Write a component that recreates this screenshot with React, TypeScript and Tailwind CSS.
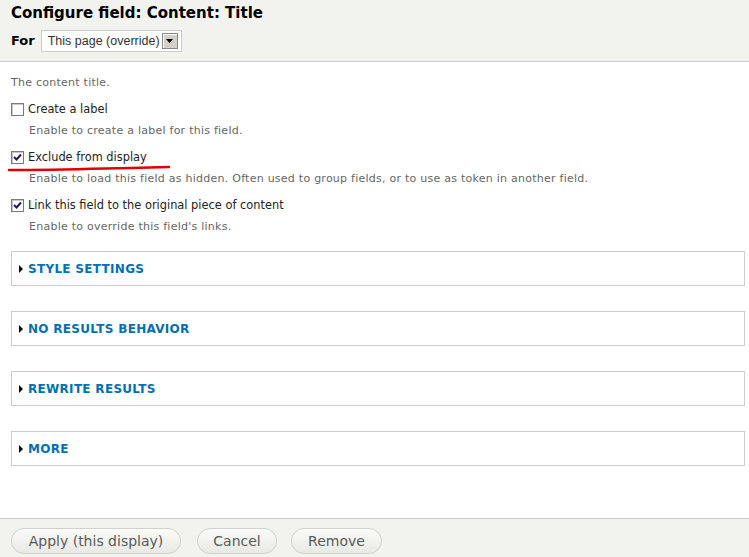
import type { ReactNode } from 'react';

const font = { fontFamily: '"DejaVu Sans", Verdana, sans-serif' };

function Check({ checked }: { checked?: boolean }) {
  return (
    <span className="inline-flex h-[13px] w-[13px] shrink-0 items-center justify-center border border-[#7a7a7a] bg-white shadow-[inset_1px_1px_0_#c8c8c8]">
      {checked && (
        <svg width="9" height="9" viewBox="0 0 9 9">
          <path d="M1 4 L3.5 6.5 L8 1.5" fill="none" stroke="#1c1c5e" strokeWidth="2" />
        </svg>
      )}
    </span>
  );
}

function Option({ label, help, checked, children }: { label: string; help: string; checked?: boolean; children?: ReactNode }) {
  return (
    <div className="relative">
      <label className="flex items-center gap-[4px] pl-[11px] text-[11.4px] leading-[16px] text-[#222]">
        <Check checked={checked} />
        <span>{label}</span>
      </label>
      {children}
      <p className="mt-[7px] pl-[29px] text-[11px] leading-[14px] tracking-[0.25px] text-[#666]">{help}</p>
    </div>
  );
}

function Fieldset({ title }: { title: string }) {
  return (
    <div className="ml-[11px] mr-[4px] flex h-[35px] items-center border border-[#ccc] bg-white pl-[6px]">
      <svg width="6" height="8" viewBox="0 0 6 8" className="mr-[4px]">
        <path d="M1 0 L5 4 L1 8 Z" fill="#000" />
      </svg>
      <span className="text-[12px] font-bold tracking-[0.3px] text-[#0071b3]">{title}</span>
    </div>
  );
}

export default function App() {
  return (
    <div className="flex h-[557px] w-[749px] flex-col bg-white" style={font}>
      {/* header */}
      <div className="h-[62px] border-b border-[#ccc] bg-[#f2f2ee] px-[11px] pt-[3px]">
        <h1 className="text-[15px] font-bold leading-[20px] text-black">Configure field: Content: Title</h1>
        <div className="mt-[7px] flex items-center gap-[6px]">
          <span className="text-[13px] font-bold text-black">For</span>
          <div className="flex h-[22px] w-[141px] items-center justify-between border border-[#ccc] bg-white pl-[6px] pr-[3px]">
            <span
              className="whitespace-nowrap text-[12.5px] text-[#333]"
              style={{ fontFamily: '"Liberation Sans", Arial, sans-serif' }}
            >
              This page (override)
            </span>
            <span className="flex h-[16px] w-[16px] items-center justify-center border border-[#888] bg-[#d4d0c8] shadow-[inset_1px_1px_0_#fff]">
              <svg width="7" height="4" viewBox="0 0 7 4">
                <path d="M0 0 H7 L3.5 4 Z" fill="#000" />
              </svg>
            </span>
          </div>
        </div>
      </div>

      {/* body */}
      <div className="flex-1 pt-[14px]">
        <p className="pl-[11px] text-[11px] leading-[14px] tracking-[0.25px] text-[#666]">The content title.</p>
        <div className="mt-[11px] flex flex-col gap-[11px]">
          <Option label="Create a label" help="Enable to create a label for this field." />
          <Option
            label="Exclude from display"
            checked
            help="Enable to load this field as hidden. Often used to group fields, or to use as token in another field."
          >
            <svg width="170" height="7" viewBox="0 0 170 7" className="absolute left-[6px] top-[16px]">
              <path d="M3 5 C40 5, 80 4, 100 3.5 S150 2.5, 163 2" fill="none" stroke="#e00000" strokeWidth="2.5" strokeLinecap="round" />
            </svg>
          </Option>
          <Option label="Link this field to the original piece of content" checked help="Enable to override this field's links." />
        </div>

        <div className="mt-[17px] flex flex-col gap-[25px]">
          <Fieldset title="STYLE SETTINGS" />
          <Fieldset title="NO RESULTS BEHAVIOR" />
          <Fieldset title="REWRITE RESULTS" />
          <Fieldset title="MORE" />
        </div>
      </div>

      {/* footer */}
      <div className="flex h-[39px] items-start border-t border-[#ccc] bg-[#f2f2ee] px-[11px] pt-[9px]">
        <button type="button" className="h-[26px] w-[170px] rounded-full border border-[#d0d0cc] bg-gradient-to-b from-[#fbfbf9] to-[#e8e8e4] text-[14px] text-[#5a5a5a]">
          Apply (this display)
        </button>
        <button type="button" className="ml-[16px] h-[26px] w-[80px] rounded-full border border-[#d0d0cc] bg-gradient-to-b from-[#fbfbf9] to-[#e8e8e4] text-[14px] text-[#5a5a5a]">
          Cancel
        </button>
        <button type="button" className="ml-[14px] h-[26px] w-[91px] rounded-full border border-[#d0d0cc] bg-gradient-to-b from-[#fbfbf9] to-[#e8e8e4] text-[14px] text-[#5a5a5a]">
          Remove
        </button>
      </div>
    </div>
  );
}
